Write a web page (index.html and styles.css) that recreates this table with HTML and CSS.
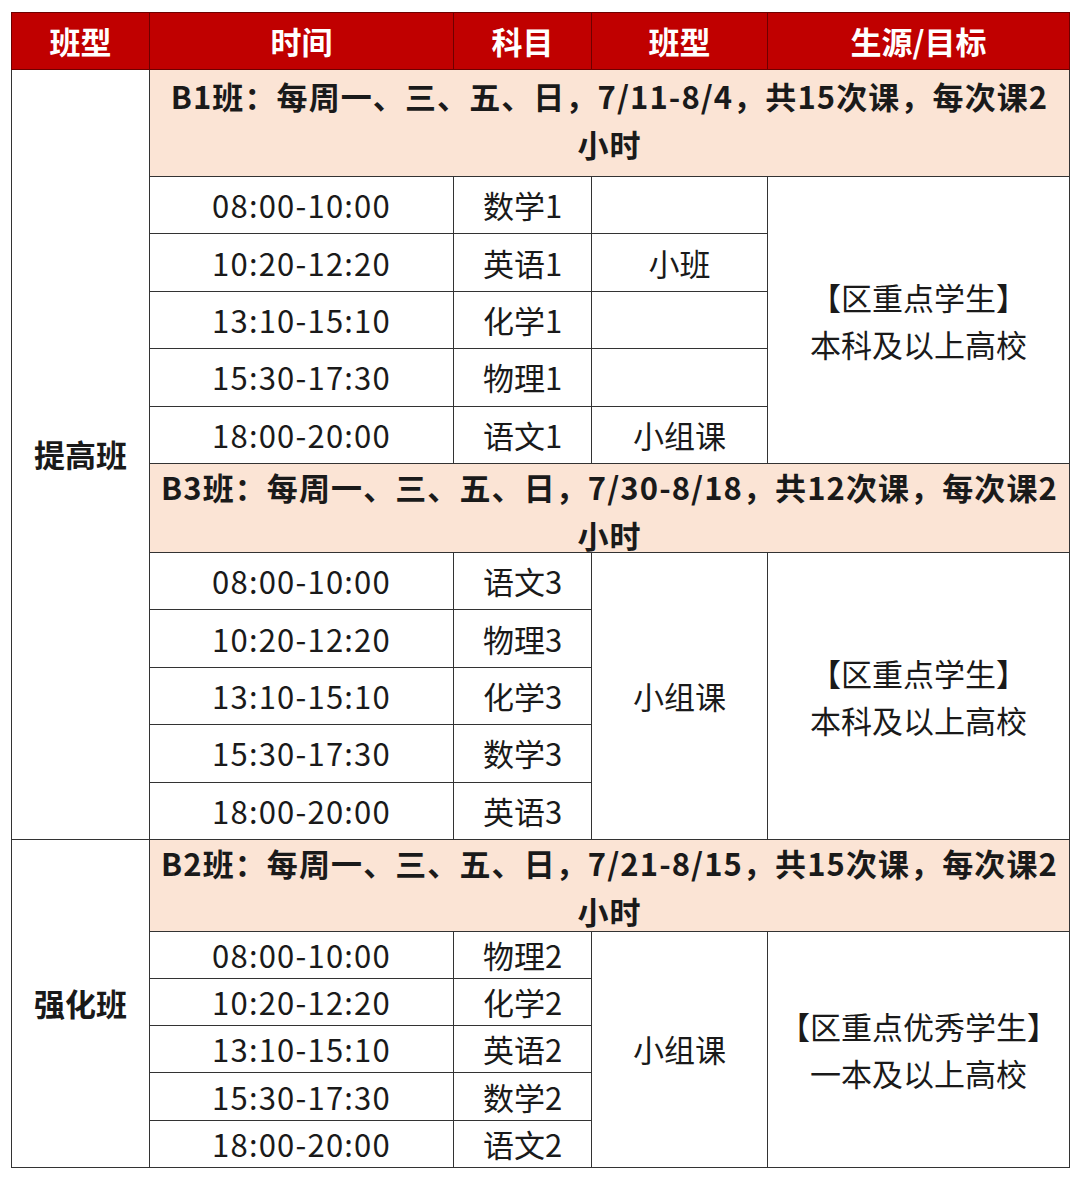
FILE: index.html
```html
<!DOCTYPE html>
<html lang="zh-CN">
<head>
<meta charset="utf-8">
<title>课程安排</title>
<link rel="stylesheet" href="styles.css">
</head>
<body>
<table class="schedule">
  <colgroup>
    <col class="c-type">
    <col class="c-time">
    <col class="c-subj">
    <col class="c-kind">
    <col class="c-goal">
  </colgroup>
  <thead>
    <tr class="head-row">
      <th>班型</th>
      <th>时间</th>
      <th>科目</th>
      <th>班型</th>
      <th>生源/目标</th>
    </tr>
  </thead>
  <tbody>
    <tr class="sec sec-b1">
      <td rowspan="12" class="group">提高班</td>
      <td colspan="4" class="sec-title"><div class="sec-text">B1班：每周一、三、五、日，7/11-8/4，共15次课，每次课2<br>小时</div></td>
    </tr>
    <tr class="row-a">
      <td class="time">08:00-10:00</td>
      <td>数学1</td>
      <td></td>
      <td rowspan="5" class="goal">【区重点学生】<br>本科及以上高校</td>
    </tr>
    <tr class="row-a">
      <td class="time">10:20-12:20</td>
      <td>英语1</td>
      <td>小班</td>
    </tr>
    <tr class="row-a">
      <td class="time">13:10-15:10</td>
      <td>化学1</td>
      <td></td>
    </tr>
    <tr class="row-a">
      <td class="time">15:30-17:30</td>
      <td>物理1</td>
      <td></td>
    </tr>
    <tr class="row-a">
      <td class="time">18:00-20:00</td>
      <td>语文1</td>
      <td>小组课</td>
    </tr>
    <tr class="sec sec-b3">
      <td colspan="4" class="sec-title"><div class="sec-text">B3班：每周一、三、五、日，7/30-8/18，共12次课，每次课2<br>小时</div></td>
    </tr>
    <tr class="row-a">
      <td class="time">08:00-10:00</td>
      <td>语文3</td>
      <td rowspan="5">小组课</td>
      <td rowspan="5" class="goal">【区重点学生】<br>本科及以上高校</td>
    </tr>
    <tr class="row-a">
      <td class="time">10:20-12:20</td>
      <td>物理3</td>
    </tr>
    <tr class="row-a">
      <td class="time">13:10-15:10</td>
      <td>化学3</td>
    </tr>
    <tr class="row-a">
      <td class="time">15:30-17:30</td>
      <td>数学3</td>
    </tr>
    <tr class="row-a">
      <td class="time">18:00-20:00</td>
      <td>英语3</td>
    </tr>
    <tr class="sec sec-b2">
      <td rowspan="6" class="group">强化班</td>
      <td colspan="4" class="sec-title"><div class="sec-text">B2班：每周一、三、五、日，7/21-8/15，共15次课，每次课2<br>小时</div></td>
    </tr>
    <tr class="row-b">
      <td class="time">08:00-10:00</td>
      <td>物理2</td>
      <td rowspan="5">小组课</td>
      <td rowspan="5" class="goal">【区重点优秀学生】<br>一本及以上高校</td>
    </tr>
    <tr class="row-b">
      <td class="time">10:20-12:20</td>
      <td>化学2</td>
    </tr>
    <tr class="row-b">
      <td class="time">13:10-15:10</td>
      <td>英语2</td>
    </tr>
    <tr class="row-b">
      <td class="time">15:30-17:30</td>
      <td>数学2</td>
    </tr>
    <tr class="row-b">
      <td class="time">18:00-20:00</td>
      <td>语文2</td>
    </tr>
  </tbody>
</table>
</body>
</html>
```

FILE: styles.css
```css
html, body {
  margin: 0;
  padding: 0;
  background: #ffffff;
}

body {
  padding: 12px 11px 0 11px;
  font-family: "Noto Sans CJK SC", "Noto Sans", sans-serif;
  color: #1a1a1a;
}

.schedule {
  width: 1058px;
  table-layout: fixed;
  border-collapse: collapse;
  border: 1.5px solid #333;
}

.c-type { width: 138px; }
.c-time { width: 304px; }
.c-subj { width: 138px; }
.c-kind { width: 176px; }
.c-goal { width: 302px; }

.schedule th,
.schedule td {
  border: 1.5px solid #333;
  padding: 0;
  text-align: center;
  vertical-align: middle;
  font-size: 31px;
  line-height: 40px;
}

.head-row {
  height: 57px;
}

.schedule .head-row th {
  background: #c00000;
  color: #ffffff;
  font-weight: 700;
  border-color: #6e0000;
}

.schedule .group {
  font-weight: 700;
  color: #1a1a1a;
}

.schedule .sec-title {
  background: #fbe4d5;
  font-weight: 700;
  letter-spacing: 1.1px;
}

.sec-text {
  line-height: 48px;
}

.sec-b1 { height: 107px; }
.sec-b3 { height: 89px; }
.sec-b2 { height: 92px; }

.sec-b1 .sec-text { margin: -6px 0 0 0; }
.sec-b3 .sec-text { margin: -1px 0 -8px 0; }
.sec-b2 .sec-text { margin: -2px 0 -5px 0; }

.row-a { height: 57.4px; }
.row-b { height: 47.2px; }

.schedule .time {
  letter-spacing: 1.2px;
}

.schedule .goal {
  line-height: 47px;
}
```
